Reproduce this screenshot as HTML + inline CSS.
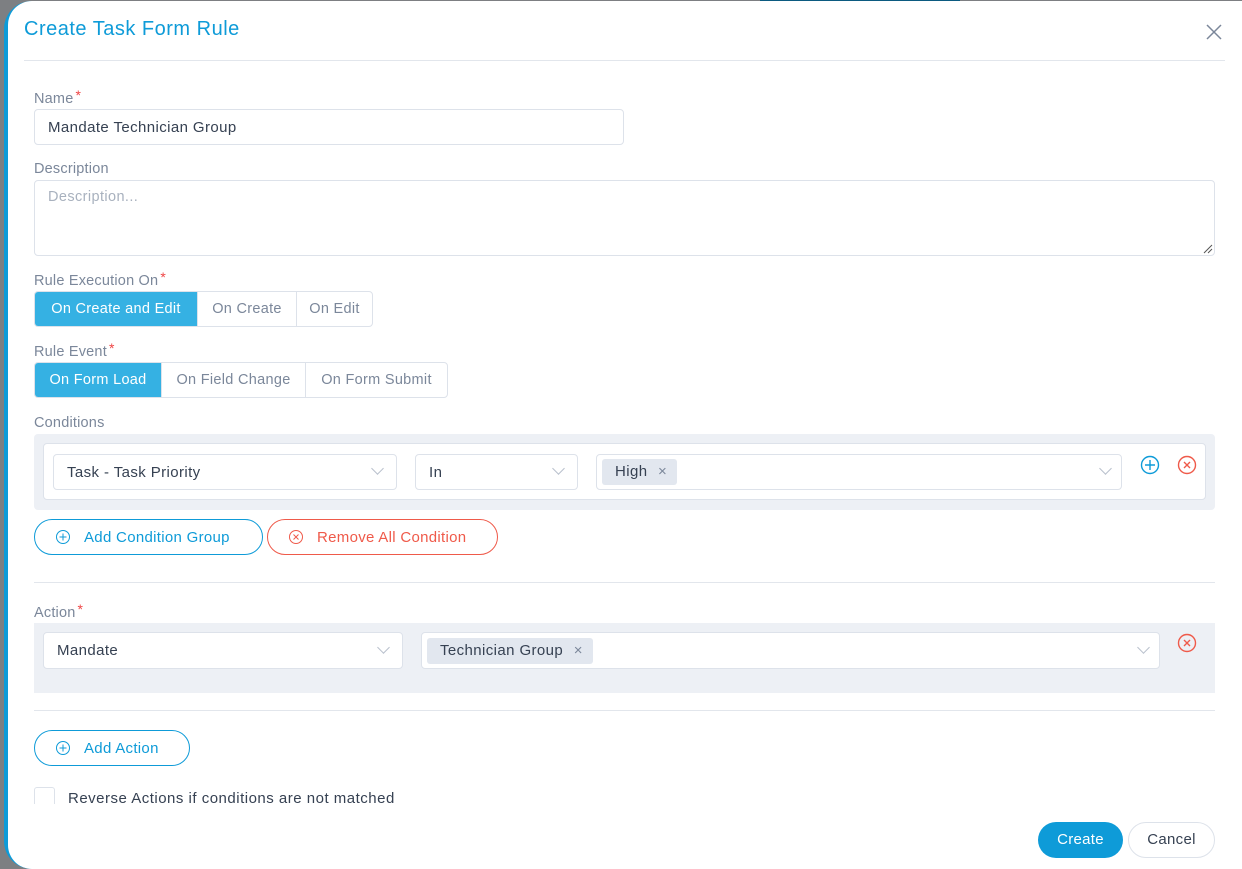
<!DOCTYPE html>
<html><head><style>
*{box-sizing:border-box;margin:0;padding:0}
body{width:1242px;height:869px;overflow:hidden;background:#7d7f82;font-family:"Liberation Sans",sans-serif;position:relative}
.a{position:absolute}
#m{position:absolute;left:4px;top:1px;width:1250px;height:868px;background:#0e9bd8;border-radius:28px 0 0 28px}
#w{position:absolute;left:8px;top:1px;width:1240px;height:868px;background:#fff;border-radius:24px 0 0 24px}
.lbl{position:absolute;font-size:14.5px;color:#7b879a;letter-spacing:.2px}
.st{color:#ef4444;font-size:14px;position:relative;top:-3px;margin-left:2px}
.inp{position:absolute;border:1px solid #dde2ea;border-radius:4px;background:#fff;font-size:15px;color:#364152;letter-spacing:.4px}
.bg{position:absolute;display:flex;border:1px solid #dde2ea;border-radius:4px;overflow:hidden;height:36px}
.bg div{text-align:center;line-height:34px;font-size:14.5px;color:#7b879a;border-left:1px solid #dde2ea;letter-spacing:.3px}
.bg div.on{background:#35b1e3;color:#fff;border-left:none}
.chev{position:absolute;width:9px;height:9px;border-right:1px solid #b8c0cc;border-bottom:1px solid #b8c0cc;transform:rotate(45deg)}
.tag{position:absolute;background:#e2e7ef;border-radius:3px;font-size:15px;color:#364152;height:26px;line-height:26px;padding:0 8px;letter-spacing:.4px}
.pill{position:absolute;border-radius:18px;height:36px;font-size:15px;line-height:36px;letter-spacing:.3px}
.hr{position:absolute;height:1px;background:#e2e6ec}
</style></head><body>
<div class="a" style="left:760px;top:0;width:200px;height:2px;background:#0b5a80"></div>
<div id="m"></div><div id="w"></div>
<div class="a" style="left:24px;top:18px;font-size:20px;color:#0e9bd8;letter-spacing:.5px">Create Task Form Rule</div>
<svg class="a" style="left:1206px;top:24px" width="16" height="16"><path d="M1 1L15 15M15 1L1 15" stroke="#7b879a" stroke-width="1.5"/></svg>
<div class="hr" style="left:24px;top:60px;width:1201px"></div>

<div class="lbl" style="left:34px;top:90px">Name<span class="st">*</span></div>
<div class="inp" style="left:34px;top:109px;width:590px;height:36px;padding:9px 13px">Mandate Technician Group</div>
<div class="lbl" style="left:34px;top:161px">Description</div>
<div class="inp" style="left:34px;top:180px;width:1181px;height:76px;padding:8px 13px;color:#a8b1be;font-size:14.5px">Description...</div>
<svg class="a" style="left:1203px;top:244px" width="10" height="10"><path d="M1 9L9 1M5 9L9 5" stroke="#555" stroke-width="1"/></svg>

<div class="lbl" style="left:34px;top:272px">Rule Execution On<span class="st">*</span></div>
<div class="bg" style="left:34px;top:291px"><div class="on" style="width:162px">On Create and Edit</div><div style="width:99px">On Create</div><div style="width:76px">On Edit</div></div>
<div class="lbl" style="left:34px;top:343px">Rule Event<span class="st">*</span></div>
<div class="bg" style="left:34px;top:362px"><div class="on" style="width:126px">On Form Load</div><div style="width:144px">On Field Change</div><div style="width:142px">On Form Submit</div></div>

<div class="lbl" style="left:34px;top:415px">Conditions</div>
<div class="a" style="left:34px;top:434px;width:1181px;height:76px;background:#edf0f5;border-radius:4px"></div>
<div class="a" style="left:43px;top:443px;width:1163px;height:57px;background:#fff;border:1px solid #dde2ea;border-radius:4px"></div>
<div class="inp" style="left:53px;top:454px;width:344px;height:36px;padding:9px 13px">Task - Task Priority</div>
<div class="chev" style="left:373px;top:464px"></div>
<div class="inp" style="left:415px;top:454px;width:163px;height:36px;padding:9px 13px">In</div>
<div class="chev" style="left:554px;top:464px"></div>
<div class="inp" style="left:596px;top:454px;width:526px;height:36px"></div>
<div class="tag" style="left:602px;top:459px;padding:0 10px 0 13px">High <span style="color:#7b879a;margin-left:6px">×</span></div>
<div class="chev" style="left:1101px;top:464px"></div>
<svg class="a" style="left:1140px;top:455px" width="20" height="20"><circle cx="10" cy="10" r="8.5" fill="none" stroke="#0e9bd8" stroke-width="1.4"/><path d="M10 5V15M5 10H15" stroke="#0e9bd8" stroke-width="1.4"/></svg>
<svg class="a" style="left:1177px;top:455px" width="20" height="20"><circle cx="10" cy="10" r="8.5" fill="none" stroke="#ef5a4a" stroke-width="1.4"/><path d="M7 7L13 13M13 7L7 13" stroke="#ef5a4a" stroke-width="1.4"/></svg>

<div class="pill" style="left:34px;top:519px;width:229px;border:1px solid #0e9bd8;color:#0e9bd8;padding-left:49px">Add Condition Group</div>
<svg class="a" style="left:55px;top:529px" width="16" height="16"><circle cx="8" cy="8" r="6.5" fill="none" stroke="#0e9bd8"/><path d="M8 4.5V11.5M4.5 8H11.5" stroke="#0e9bd8"/></svg>
<div class="pill" style="left:267px;top:519px;width:231px;border:1px solid #ef5a4a;color:#ef5a4a;padding-left:49px">Remove All Condition</div>
<svg class="a" style="left:288px;top:529px" width="16" height="16"><circle cx="8" cy="8" r="6.5" fill="none" stroke="#ef5a4a"/><path d="M5.5 5.5L10.5 10.5M10.5 5.5L5.5 10.5" stroke="#ef5a4a"/></svg>

<div class="hr" style="left:34px;top:582px;width:1181px"></div>
<div class="lbl" style="left:34px;top:604px">Action<span class="st">*</span></div>
<div class="a" style="left:34px;top:623px;width:1181px;height:70px;background:#edf0f5"></div>
<div class="inp" style="left:43px;top:632px;width:360px;height:37px;padding:9px 13px">Mandate</div>
<div class="chev" style="left:379px;top:643px"></div>
<div class="inp" style="left:421px;top:632px;width:739px;height:37px"></div>
<div class="tag" style="left:427px;top:638px;padding:0 10px 0 13px">Technician Group <span style="color:#7b879a;margin-left:6px">×</span></div>
<div class="chev" style="left:1139px;top:643px"></div>
<svg class="a" style="left:1177px;top:633px" width="20" height="20"><circle cx="10" cy="10" r="8.5" fill="none" stroke="#ef5a4a" stroke-width="1.4"/><path d="M7 7L13 13M13 7L7 13" stroke="#ef5a4a" stroke-width="1.4"/></svg>

<div class="hr" style="left:34px;top:710px;width:1181px"></div>
<div class="pill" style="left:34px;top:730px;width:156px;border:1px solid #0e9bd8;color:#0e9bd8;padding-left:49px">Add Action</div>
<svg class="a" style="left:55px;top:740px" width="16" height="16"><circle cx="8" cy="8" r="6.5" fill="none" stroke="#0e9bd8"/><path d="M8 4.5V11.5M4.5 8H11.5" stroke="#0e9bd8"/></svg>

<div class="a" style="left:34px;top:787px;width:1181px;height:17px;overflow:hidden">
<div class="a" style="left:0;top:0;width:21px;height:21px;border:1px solid #dde2ea;border-radius:3px"></div>
<div class="a" style="left:34px;top:3px;font-size:15px;color:#364152;letter-spacing:.5px">Reverse Actions if conditions are not matched</div></div>

<div class="pill" style="left:1038px;top:822px;width:85px;background:#0e9bd8;color:#fff;text-align:center">Create</div>
<div class="pill" style="left:1128px;top:822px;width:87px;border:1px solid #dde2ea;color:#364152;text-align:center;line-height:34px">Cancel</div>
</body></html>
